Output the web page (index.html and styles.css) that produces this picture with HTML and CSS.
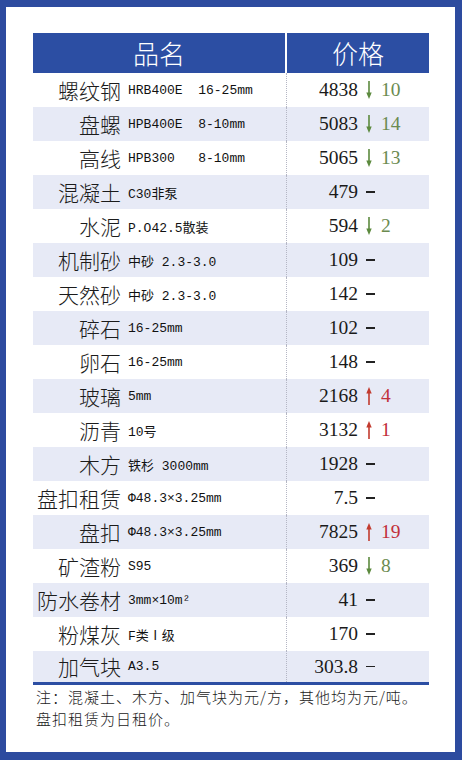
FILE: index.html
```html
<!DOCTYPE html>
<html lang="zh">
<head>
<meta charset="utf-8">
<link rel="stylesheet" href="styles.css">
</head>
<body>
<div class="panel">
  <div class="table">
    <div class="head"><div>品名</div><div>价格</div></div>
    <div class="row"><div class="nc"><span class="name">螺纹钢</span><span class="spec">HRB400E  16-25mm</span></div><div class="pc"><span class="price">4838</span><svg class="arr" viewBox="0 0 6 18" width="6" height="18"><path d="M3 0V12" stroke="#5c8a3e" stroke-width="1.6"/><path d="M0.3 11.5H5.7L3 18Z" fill="#5c8a3e"/></svg><span class="chg dn">10</span></div></div>
    <div class="row alt"><div class="nc"><span class="name">盘螺</span><span class="spec">HPB400E  8-10mm</span></div><div class="pc"><span class="price">5083</span><svg class="arr" viewBox="0 0 6 18" width="6" height="18"><path d="M3 0V12" stroke="#5c8a3e" stroke-width="1.6"/><path d="M0.3 11.5H5.7L3 18Z" fill="#5c8a3e"/></svg><span class="chg dn">14</span></div></div>
    <div class="row"><div class="nc"><span class="name">高线</span><span class="spec">HPB300   8-10mm</span></div><div class="pc"><span class="price">5065</span><svg class="arr" viewBox="0 0 6 18" width="6" height="18"><path d="M3 0V12" stroke="#5c8a3e" stroke-width="1.6"/><path d="M0.3 11.5H5.7L3 18Z" fill="#5c8a3e"/></svg><span class="chg dn">13</span></div></div>
    <div class="row alt"><div class="nc"><span class="name">混凝土</span><span class="spec">C30非泵</span></div><div class="pc"><span class="price">479</span><span class="dash"></span></div></div>
    <div class="row"><div class="nc"><span class="name">水泥</span><span class="spec">P.O42.5散装</span></div><div class="pc"><span class="price">594</span><svg class="arr" viewBox="0 0 6 18" width="6" height="18"><path d="M3 0V12" stroke="#5c8a3e" stroke-width="1.6"/><path d="M0.3 11.5H5.7L3 18Z" fill="#5c8a3e"/></svg><span class="chg dn">2</span></div></div>
    <div class="row alt"><div class="nc"><span class="name">机制砂</span><span class="spec">中砂 2.3-3.0</span></div><div class="pc"><span class="price">109</span><span class="dash"></span></div></div>
    <div class="row"><div class="nc"><span class="name">天然砂</span><span class="spec">中砂 2.3-3.0</span></div><div class="pc"><span class="price">142</span><span class="dash"></span></div></div>
    <div class="row alt"><div class="nc"><span class="name">碎石</span><span class="spec">16-25mm</span></div><div class="pc"><span class="price">102</span><span class="dash"></span></div></div>
    <div class="row"><div class="nc"><span class="name">卵石</span><span class="spec">16-25mm</span></div><div class="pc"><span class="price">148</span><span class="dash"></span></div></div>
    <div class="row alt"><div class="nc"><span class="name">玻璃</span><span class="spec">5mm</span></div><div class="pc"><span class="price">2168</span><svg class="arr" viewBox="0 0 6 18" width="6" height="18"><path d="M3 18V6" stroke="#c23a2e" stroke-width="1.6"/><path d="M0.3 6.5H5.7L3 0Z" fill="#c23a2e"/></svg><span class="chg up">4</span></div></div>
    <div class="row"><div class="nc"><span class="name">沥青</span><span class="spec">10号</span></div><div class="pc"><span class="price">3132</span><svg class="arr" viewBox="0 0 6 18" width="6" height="18"><path d="M3 18V6" stroke="#c23a2e" stroke-width="1.6"/><path d="M0.3 6.5H5.7L3 0Z" fill="#c23a2e"/></svg><span class="chg up">1</span></div></div>
    <div class="row alt"><div class="nc"><span class="name">木方</span><span class="spec">铁杉 3000mm</span></div><div class="pc"><span class="price">1928</span><span class="dash"></span></div></div>
    <div class="row"><div class="nc"><span class="name">盘扣租赁</span><span class="spec">Φ48.3×3.25mm</span></div><div class="pc"><span class="price">7.5</span><span class="dash"></span></div></div>
    <div class="row alt"><div class="nc"><span class="name">盘扣</span><span class="spec">Φ48.3×3.25mm</span></div><div class="pc"><span class="price">7825</span><svg class="arr" viewBox="0 0 6 18" width="6" height="18"><path d="M3 18V6" stroke="#c23a2e" stroke-width="1.6"/><path d="M0.3 6.5H5.7L3 0Z" fill="#c23a2e"/></svg><span class="chg up">19</span></div></div>
    <div class="row"><div class="nc"><span class="name">矿渣粉</span><span class="spec">S95</span></div><div class="pc"><span class="price">369</span><svg class="arr" viewBox="0 0 6 18" width="6" height="18"><path d="M3 0V12" stroke="#5c8a3e" stroke-width="1.6"/><path d="M0.3 11.5H5.7L3 18Z" fill="#5c8a3e"/></svg><span class="chg dn">8</span></div></div>
    <div class="row alt"><div class="nc"><span class="name">防水卷材</span><span class="spec">3mm×10m²</span></div><div class="pc"><span class="price">41</span><span class="dash"></span></div></div>
    <div class="row"><div class="nc"><span class="name">粉煤灰</span><span class="spec">F类Ⅰ级</span></div><div class="pc"><span class="price">170</span><span class="dash"></span></div></div>
    <div class="row alt last"><div class="nc"><span class="name">加气块</span><span class="spec">A3.5</span></div><div class="pc"><span class="price">303.8</span><span class="dash"></span></div></div>
  </div>
  <div class="note">注：混凝土、木方、加气块为元/方，其他均为元/吨。<br>盘扣租赁为日租价。</div>
</div>
</body>
</html>
```
FILE: styles.css
```css
html, body {
  margin: 0;
  padding: 0;
}
body {
  background: #2d4b9f;
  width: 462px;
  height: 760px;
  overflow: hidden;
  font-family: "Noto Sans CJK SC", sans-serif;
  color: #1b1b1b;
}
.panel {
  margin: 7px 7px 0 6px;
  height: 745px;
  background: #fff;
  padding: 26px 0 0 27px;
  box-sizing: border-box;
}
.table {
  width: 396px;
}
.head {
  display: grid;
  grid-template-columns: 252px 142px;
  column-gap: 2px;
  height: 40px;
}
.head div {
  background: #2c4ea3;
  color: #fff;
  font-size: 26px;
  font-weight: 300;
  line-height: 1;
  display: flex;
  align-items: center;
  justify-content: center;
}
.row {
  display: grid;
  grid-template-columns: 253px 143px;
  height: 34px;
  box-sizing: border-box;
}
.row.alt {
  background: #e7eaf6;
}
.row.last {
  border-bottom: 3px solid #2c4ea3;
}
.nc {
  display: flex;
  align-items: center;
}
.name {
  flex: none;
  width: 88px;
  text-align: right;
  font-size: 21px;
  font-weight: 300;
  line-height: 1;
  color: #1b1b1b;
}
.spec {
  margin-left: 7px;
  font-family: "Liberation Mono", "Noto Sans CJK SC", monospace;
  font-size: 13px;
  white-space: pre;
  color: #111;
}
.pc {
  display: flex;
  align-items: center;
  border-left: 1px dotted #b4b6c4;
  box-sizing: border-box;
}
.price {
  flex: none;
  width: 71px;
  text-align: right;
  font-family: "Liberation Serif", serif;
  font-size: 19.5px;
  line-height: 1;
  color: #1a1a1a;
}
.arr {
  flex: none;
  margin-left: 8px;
  display: block;
}
.chg {
  margin-left: 9px;
  font-family: "Liberation Serif", serif;
  font-size: 19.5px;
  line-height: 1;
}
.chg.dn {
  color: #6b8b50;
}
.chg.up {
  color: #c2303a;
}
.dash {
  flex: none;
  display: block;
  margin-left: 8px;
  width: 9px;
  height: 1.4px;
  background: #222;
}
.note {
  margin-top: 1px;
  padding-left: 3px;
  font-size: 15px;
  letter-spacing: 1px;
  font-weight: 300;
  line-height: 22px;
  color: #222;
}
```
